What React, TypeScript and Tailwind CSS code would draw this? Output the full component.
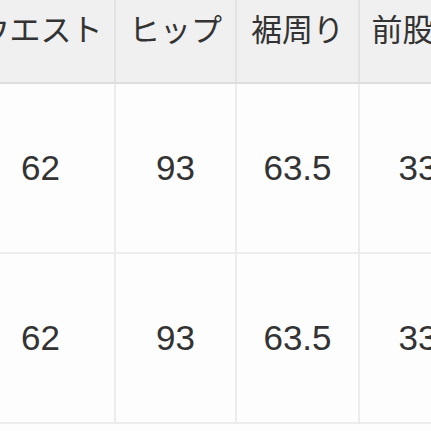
const columns = ['ウエスト', 'ヒップ', '裾周り', '前股下']
const rows = [
  ['62', '93', '63.5', '33'],
  ['62', '93', '63.5', '33'],
]
const widths = ['w-[149px]', 'w-[121px]', 'w-[123px]', 'w-[118px]']

export default function App() {
  return (
    <div
      className="w-[431px] h-[431px] overflow-hidden bg-[#fdfdfd] text-[#333]"
      style={{ fontFamily: '"Liberation Sans", "Noto Sans CJK JP", sans-serif' }}
    >
      <div className="ml-[-33px] w-max">
        {/* header */}
        <div className="flex bg-[#f0f0f0] border-b-2 border-[#dedede]">
          {columns.map((c, i) => (
            <div
              key={c}
              className={`${widths[i]} h-[82px] shrink-0 flex justify-center pt-[11px] text-[31px] leading-[40px] border-r-2 border-[#e2e2e2]`}
            >
              {c}
            </div>
          ))}
        </div>

        {/* body rows */}
        {rows.map((r, ri) => (
          <div key={ri} className="flex border-b-2 border-[#ececec]">
            {r.map((v, i) => (
              <div
                key={i}
                className={`${widths[i]} h-[168px] shrink-0 flex items-center justify-center text-[35px] border-r-2 border-[#ececec]`}
              >
                {v}
              </div>
            ))}
          </div>
        ))}
      </div>
    </div>
  )
}
